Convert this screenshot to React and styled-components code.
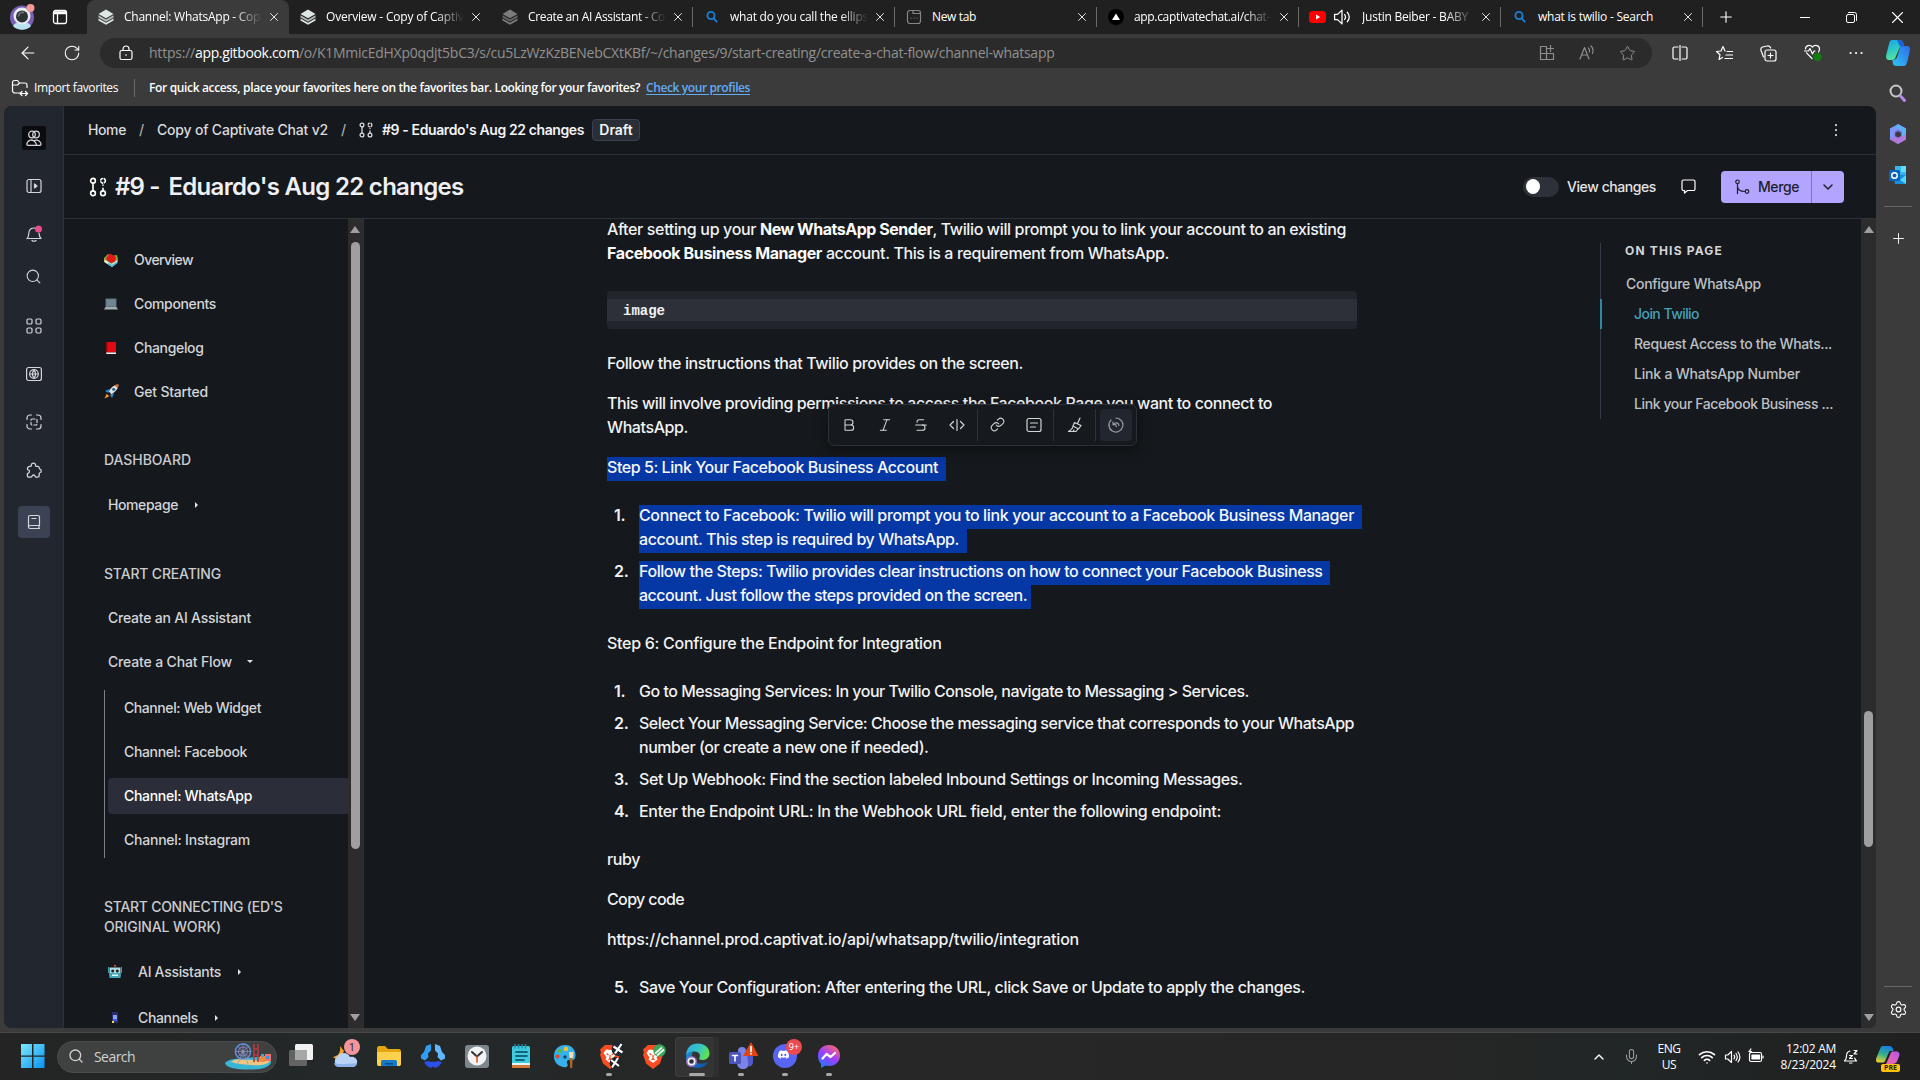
import React from "react";
import styled, { createGlobalStyle, css } from "styled-components";
import {
  ArrowLeft, RotateCw, Plus, X, Star, Search, Bold, Italic,
  Strikethrough, ChevronDown, ChevronUp, Mic, Wifi, Settings, Link,
} from "lucide-react";
import { FaDiscord } from "react-icons/fa";

const UI = '"Open Sans", "Noto Sans", sans-serif';
const APP = '"Inter", "Liberation Sans", sans-serif';

const Global = createGlobalStyle`
  *, *::before, *::after { box-sizing: border-box; }
  html, body { margin: 0; background: #202020; }
  body { width: 1920px; height: 1080px; overflow: hidden; }
  svg { display: block; flex: none; }
`;

const T = styled.span`
  letter-spacing: ${(p) => p.$ls || 0}px;
  white-space: pre;
`;

const Screen = styled.div`
  width: 1920px; height: 1080px; display: flex; flex-direction: column;
  font-family: ${UI}; font-size: 12px; color: #fff; overflow: hidden;
`;

/* ---------- tab strip ---------- */
const TabStrip = styled.div`
  height: 34px; flex: none; display: flex; background: #202020;
`;
const StripButton = styled.div`
  width: ${(p) => p.$w}px; height: 34px; display: flex; align-items: center; justify-content: center; flex: none;
`;
const Tab = styled.div`
  width: 202px; height: 34px; display: flex; align-items: center; padding: 0 7px 0 ${(p) => (p.$wide ? 10 : 11)}px;
  ${(p) => p.$active && css`background: #3b3b3b; border-radius: 8px 8px 0 0;`}
  ${(p) => p.$rule && css`background: linear-gradient(#6a6a6a, #6a6a6a) right center / 1px 20px no-repeat;`}
`;
const TabTitle = styled.div`
  flex: 1; min-width: 0; margin-left: ${(p) => (p.$sound ? 4 : 10)}px; line-height: 20px;
  ${(p) => p.$fade && css`mask-image: linear-gradient(90deg, #000 calc(100% - 28px), transparent);`}
`;
const TabClose = styled.div`
  width: 16px; margin-left: 4px; display: flex; justify-content: center;
`;

/* ---------- window body ---------- */
const Window = styled.div`
  height: 998px; flex: none; display: flex; background: #3b3b3b;
`;
const Main = styled.div`
  width: 1876px; display: flex; flex-direction: column;
`;
const AddressRow = styled.div`
  height: 38px; flex: none; display: flex; align-items: center; padding-left: 6px;
`;
const NavButton = styled.div`
  width: ${(p) => p.$w || 44}px; height: 30px; display: flex; align-items: center; justify-content: center; flex: none;
  margin-left: ${(p) => p.$ml || 0}px;
`;
const Omnibox = styled.div`
  width: 1552px; height: 30px; margin-left: 6px; padding: 0 5px 0 18px; border-radius: 15px; background: #2b2b2b;
  display: flex; align-items: center; color: #919191; font-size: 14px; flex: none;
`;
const Url = styled.div`
  flex: 1; margin-left: 15px; line-height: 20px; b { color: #fff; font-weight: 400; }
`;
const OmniIcon = styled.div`
  width: 40px; display: flex; justify-content: center; color: #8d8d8d;
`;
const FavBar = styled.div`
  height: 34px; flex: none; display: flex; align-items: center; padding: 0 0 3px 11px; line-height: 18px;
`;
const FavLabel = styled.span`margin-left: 5px; width: 100px;`;
const FavHint = styled.div`
  border-left: 1px solid #6a6a6a; padding-left: 14px; font-weight: 600; height: 18px; display: flex; gap: 6px;
`;
const FavLink = styled.span`color: #62abf5; text-decoration: underline; text-underline-offset: 2px;`;

const EdgeBar = styled.div`
  width: 44px; display: flex; flex-direction: column; align-items: center;
`;
const EdgeItem = styled.div`
  height: ${(p) => p.$h}px; display: flex; align-items: center; justify-content: center;
`;
const EdgeRule = styled.div`width: 28px; height: 1px; background: #666;`;
const Grow = styled.div`flex: 1;`;

/* ---------- page ---------- */
const Page = styled.div`
  height: 922px; margin-left: 4px; border-radius: 8px; overflow: hidden; display: flex;
  background: #15181c; font-family: ${APP}; font-size: 14px; font-weight: 500;
`;
const Rail = styled.div`
  width: 60px; background: #22262e; border-right: 1px solid #2d3139; display: flex; flex-direction: column; align-items: center;
  color: #d3d5d9; padding-top: 2px;
`;
const RailItem = styled.div`
  width: 32px; height: 32px; border-radius: 4px; display: flex; align-items: center; justify-content: center;
  margin-top: ${(p) => p.$mt}px;
  ${(p) => p.$active && css`background: #3a4253;`}
`;
const Avatar = styled.div`
  width: 24px; height: 24px; border-radius: 2px; background: #0b0c0f; margin-top: 18px;
  display: flex; align-items: center; justify-content: center;
`;
const Space = styled.div`width: 1812px; display: flex; flex-direction: column;`;
const Crumbs = styled.div`
  height: 49px; flex: none; border-bottom: 1px solid #2d3139; display: flex; align-items: center;
  padding: 0 38px 1px 24px; color: #d9dbde; line-height: 20px;
`;
const Slash = styled.span`width: 31px; text-align: center; color: #a6a9ae;`;
const CrumbStrong = styled.span`font-weight: 600; color: #f2f3f5; margin-left: 9px;`;
const Draft = styled.span`
  margin-left: 8px; width: 48px; height: 22px; line-height: 20px; border-radius: 4px; border: 1px solid #3a4150;
  background: #2a2e36; text-align: center; font-weight: 600; color: #f2f3f5;
`;
const TitleRow = styled.div`
  height: 64px; flex: none; border-bottom: 1px solid #2d3139; display: flex; align-items: center; padding: 0 32px 0 25px;
`;
const Title = styled.h1`
  margin: 0 0 0 8px; font-size: 24px; line-height: 30px; font-weight: 600; color: #eef0f4; display: flex; gap: 9px;
`;
const Switch = styled.div`
  width: 36px; height: 20px; border-radius: 10px; background: #2d3139; padding: 3px; display: flex; align-items: center;
  &::before { content: ""; width: 14px; height: 15px; border-radius: 50%; background: #fff; }
`;
const SwitchLabel = styled.span`margin-left: 8px; width: 113px; color: #e3e4e7;`;
const Merge = styled.div`
  margin-left: 24px; width: 123px; height: 32px; border-radius: 4px; background: #b3a4ff; color: #1d1f2b;
  display: flex; align-items: center; overflow: hidden;
`;
const MergeMain = styled.div`
  width: 91px; height: 32px; border-right: 1px solid #7f6ae0; display: flex; align-items: center; padding-left: 13px; gap: 8px;
`;
const MergeMore = styled.div`flex: 1; display: flex; justify-content: center;`;

const Columns = styled.div`flex: 1; min-height: 0; display: flex;`;
const Nav = styled.div`
  width: 284px; padding: 19px 0 0 40px; overflow: hidden; color: #d3d5d9;
`;
const NavRow = styled.div`
  height: ${(p) => p.$h || 44}px; display: flex; align-items: center; padding: 0 0 1px ${(p) => p.$pl || 0}px;
`;
const EmojiCell = styled.span`width: 30px; display: flex; align-items: center;`;
const Section = styled.div`
  padding: 12px 0; margin-top: ${(p) => p.$mt || 24}px; line-height: 20px; color: #c9cbcf;
`;
const Caret = styled.span`
  width: 0; height: 0; border-style: solid;
  ${(p) => (p.$open
    ? css`border-width: 3px 3px 0; border-color: #e3e4e7 transparent transparent; margin-left: 15px;`
    : css`border-width: 3px 0 3px 3px; border-color: transparent transparent transparent #e3e4e7; margin-left: 17px;`)}
`;
const Tree = styled.div`
  margin-top: 6px; border-left: 1px solid #7d8087; display: flex; flex-direction: column; gap: 8px; padding-left: 3px;
`;
const TreeItem = styled.div`
  height: 36px; padding: 0 0 2px 16px; display: flex; align-items: center; border-radius: 4px 0 0 4px;
  ${(p) => p.$active && css`background: #2b2d38; color: #fff;`}
`;
const NavTail = styled.div`margin-top: 1px; display: flex; flex-direction: column; gap: 2px;`;

const Scrollbar = styled.div`
  width: ${(p) => p.$w}px; background: #2c2c2c; display: flex; flex-direction: column; align-items: center;
  padding: 7px ${(p) => (p.$edge ? 1 : 0)}px 7px 0; ${(p) => p.$edge && css`border-right: 1px solid #2b2f36;`}
`;
const Arrow = styled.div`
  width: 0; height: 0; border: 5px solid transparent;
  ${(p) => (p.$down ? css`border-top: 7px solid #9f9f9f; border-bottom: 0;` : css`border-bottom: 7px solid #9f9f9f; border-top: 0;`)}
`;
const Thumb = styled.div`
  width: 9px; height: ${(p) => p.$h}px; margin-top: ${(p) => p.$mt}px; border-radius: 5px; background: #9f9f9f;
`;

const Editor = styled.div`
  position: relative; width: 1003px; padding-left: 243px; overflow: hidden; color: #f1f2f3;
  font-size: 16px; display: flex; flex-direction: column;
`;
const Line = styled.div`
  height: 24px; line-height: 21px; width: ${(p) => (p.$sel ? `${p.$sel}px` : "auto")}; white-space: pre;
  ${(p) => p.$sel && css`background: #0537a5; color: #f6f8fc;`}
  b { font-weight: 700; color: #fafafa; }
`;
const Block = styled.div`margin-bottom: ${(p) => p.$mb || 16}px;`;
const Code = styled.div`
  width: 750px; height: 38px; padding: 8px 0; border-radius: 4px; background: #22252c; margin-bottom: 24px;
`;
const CodeLine = styled.div`
  height: 22px; line-height: 24px; padding-left: 16px; background: #2d3039; font-family: "Liberation Mono", monospace;
  font-size: 14px; font-weight: 700;
`;
const List = styled.div`display: flex; flex-direction: column; gap: 8px; margin-bottom: 24px;`;
const Item = styled.div`display: flex;`;
const ItemText = styled.div`flex: none;`;
const Num = styled.span`width: 32px; flex: none; padding-left: 7px; line-height: 21px; letter-spacing: -0.2px; font-weight: 600;`;

const Toolbar = styled.div`
  position: absolute; left: 464px; top: 185px; width: 309px; height: 42px; background: #16191d;
  border: 1px solid #2d3139; border-radius: 6px; box-shadow: 0 4px 14px rgba(0, 0, 0, 0.35);
  display: flex; align-items: center; padding: 0 2px 1px; color: #d3d5d9;
`;
const Tool = styled.div`
  width: ${(p) => p.$w || 36}px; height: 32px; display: flex; align-items: center; justify-content: center; border-radius: 4px;
  flex: none;
  ${(p) => p.$active && css`background: #22262e; color: #9a9da3; margin-left: 3px;`}
`;
const ToolRule = styled.div`width: 1px; height: 32px; flex: none; background: #2d3139; margin: 0 1px 0 ${(p) => p.$ml || 1}px;`;

const TocColumn = styled.div`width: 494px; padding: 24px 0 0 233px;`;
const Toc = styled.div`
  height: 176px; width: 260px; border-left: 1px solid #333a48; color: #bdc0c4; font-size: 14px;
`;
const TocHead = styled.div`
  height: 26px; line-height: 16px; padding-left: 24px; font-size: 12px; font-weight: 700; color: #d3d5d9;
`;
const TocItem = styled.div`
  height: 30px; line-height: 29px; padding-left: ${(p) => (p.$top ? 25 : 33)}px;
  ${(p) => p.$active && css`margin-left: -1px; padding-left: 32px; border-left: 2px solid #2f87a0; color: #46a0ba;`}
`;

/* ---------- taskbar ---------- */
const Taskbar = styled.div`
  height: 48px; flex: none; border-top: 1px solid #484848; display: flex; align-items: center;
  background: linear-gradient(90deg, #242424, #232828 18%, #272727 40%, #262626 75%, #212626 85%, #202020);
`;
const StartCell = styled.div`width: 57px; padding: 0 0 1px 21px;`;
const SearchPill = styled.div`
  width: 220px; height: 32px; margin-right: 2px; border-radius: 16px; background: #3f4140; border: 1px solid #4b4d4c;
  display: flex; align-items: center; padding: 0 4px 1px 10px; font-size: 14px; color: #d0d0d0;
`;
const SearchText = styled.span`flex: 1; margin-left: 10px;`;
const AppCell = styled.div`
  width: 44px; height: 40px; display: flex; align-items: center; justify-content: center; border-radius: 4px; position: relative;
  padding: 0 0 2px ${(p) => p.$dx || 0}px;
  ${(p) => p.$active && css`background: #343434; box-shadow: inset -6px 0 0 -1px #2e2e2e, inset 0 0 0 1px #3e3e3e;`}
  ${(p) => p.$run && css`&::after {
    content: ""; position: absolute; bottom: 1px; left: ${22 - p.$run / 2}px; width: ${p.$run}px; height: 3px; border-radius: 2px; background: #a8a8a8;
  }`}
`;
const Badge = styled.span`
  position: absolute; top: 2px; right: ${(p) => p.$right || 6}px; width: 16px; height: 16px; border-radius: 8px;
  background: ${(p) => p.$bg}; color: ${(p) => p.$fg}; font-size: ${(p) => p.$fs || 11}px; line-height: 16px; text-align: center;
`;
const TrayCell = styled.div`
  width: ${(p) => p.$w}px; height: 40px; display: flex; flex-direction: column; align-items: ${(p) => (p.$end ? "flex-end" : "center")};
  justify-content: center; line-height: 16px;
`;

/* ---------- drawings ---------- */
const Svg = ({ w = 16, h, box, sw = 1.2, children }) => (
  <svg width={w} height={h || w} viewBox={box || `0 0 ${w} ${h || w}`} fill="none" stroke="currentColor" strokeWidth={sw} strokeLinecap="round" strokeLinejoin="round">
    {children}
  </svg>
);
const Layers = ({ dim }) => (
  <Svg w={16} sw={0}>
    <g fill={dim ? "#7b7d7d" : "#dfe6e6"}>
      <path d="M8 .5 15.5 5 8 9.2.5 5Z" />
      <path d="M.5 6.2 8 10.4l7.500-4.200V8.500L8 12.700.5 8.500Z" opacity=".75" />
      <path d="M.5 9.600 8 13.800l7.500-4.200V11.400L8 15.700.5 11.400Z" />
    </g>
  </Svg>
);
const BlueSearch = () => (
  <Svg w={16} sw={1.8}><g stroke="#1b7fd6"><circle cx="7" cy="6.500" r="3.600" /><path d="m9.700 9.300 3 3.400" /></g></Svg>
);
const NewTabIcon = () => (
  <Svg w={16}><g stroke="#858585"><rect x="1.500" y="1.500" width="13" height="13" rx="2.500" /><path d="M7 1.500v3h7.500M5 9h.1M8 9h.1M11 9h.1" /></g></Svg>
);
const Triangle = () => <Svg w={16} sw={0}><circle cx="8" cy="8" r="8" fill="#000" /><path d="m8 4.500 4 6.500H4Z" fill="#fff" /></Svg>;
const YouTube = () => <Svg w={17} h={16} sw={0}><rect y="2" width="17" height="12" rx="3.500" fill="#f00" /><path d="m7 5.500 4.200 2.500L7 10.500Z" fill="#fff" /></Svg>;
const Speaker = ({ w = 18 }) => (
  <Svg w={w} box="0 0 17 16" sw={1.2}><path d="M1.500 5.500h2.800L8.500 1.500v13L4.300 10.500H1.500ZM11 5.700c1 1.400 1 3.200 0 4.600M13.500 3.500c2.200 2.700 2.200 6.300 0 9" /></Svg>
);
const TraySpeaker = () => (
  <Svg w={18} h={16} sw={1.2}><path d="M1.500 6h2.300L7.500 2.500v11L3.800 10H1.500ZM10 6.200c.8 1.100.8 2.500 0 3.600M12 4.500c1.600 2.200 1.600 4.800 0 7M14 3c2.300 3 2.300 7 0 10" /></Svg>
);
const ProfilePic = () => (
  <Svg w={26} sw={0}>
    <circle cx="13" cy="13.500" r="12" fill="#7a5fb5" />
    <path d="M4 22c3-6 15-6 18 0-4 5-14 5-18 0Z" fill="#b9e3ee" />
    <circle cx="13" cy="12" r="8.500" fill="#e9edf2" /><circle cx="13" cy="12.500" r="6" fill="#2d3236" /><path d="M9.500 12a4 4 0 0 1 5-3.500" stroke="#777" strokeWidth="1.500" />
    <circle cx="21.500" cy="4" r="4" fill="#f49a94" />
  </Svg>
);
const ChangeIcon = ({ w = 14, h = 16 }) => (
  <Svg w={w} h={h} box="0 0 14 16" sw={1.3}>
    <circle cx="3" cy="3" r="1.900" /><circle cx="3" cy="13" r="1.900" /><path d="M3 5v6" />
    <circle cx="11" cy="13" r="1.900" /><circle cx="11" cy="3" r="1.900" strokeDasharray="1.500 1.500" /><path d="M11 6.500v.1M11 9v2" />
  </Svg>
);
const Books = () => (
  <Svg w={14} sw={0}><path d="m0 5 4-4 3 2 6-1 1 4-1 3-6 4-7-4Z" fill="#7fa832" /><path d="m.5 6.500 7 4.500 6-4v2.500L8 14 .5 9Z" fill="#eef3f0" /><path d="m4 9.500 4 2.300 5-3.300v2L8 14l-4-2.500Z" fill="#53b9d0" /><path d="M2.500 4.500 6 .5l6 3.500-1 4.500-4 1.500-4.500-3Z" fill="#e8141c" /></Svg>
);
const Laptop = () => (
  <Svg w={14} sw={0}><rect x="1.500" y="1.500" width="11" height="8.500" fill="#5f7480" /><path d="M0 12.500 1.500 10h11l1.500 2.500Z" fill="#a4adb2" /><path d="M2.500 2.500h9V9h-9Z" fill="#6f8791" /></Svg>
);
const RedBook = () => <Svg w={14} sw={0}><path d="M2 1h10v10.500H2Z" fill="#e20a12" /><path d="M2 1h1.500v11H2Z" fill="#8b0b10" /><path d="M2 11.500h10V13H2.500Z" fill="#f5f5f5" /></Svg>;
const Rocket = () => (
  <Svg w={15} h={15} box="0 0 14 14" sw={0}><path d="M13.500.5c-4 0-7 3-9 6.500l2.500 2.500c3.500-2 6.500-5 6.500-9Z" fill="#dfe4e7" /><path d="m9.500 1 4-.5-.5 4Z" fill="#f0641e" /><path d="M5.500 4.500 1 6.500 4 8.500ZM9.500 8.500 7.500 13 5.500 10Z" fill="#2a8fd8" /><path d="m2.500 9 2.500 2.500L.5 13.500Z" fill="#f59a23" /><circle cx="9" cy="5" r="1.500" fill="#356a8c" /></Svg>
);
const Robot = () => (
  <Svg w={14} h={14} sw={0}><path d="M1.500 2.500h11v9h-11Z" fill="#a9dbe4" /><path d="M0 2h1v6H0ZM13 2h1v6h-1Z" fill="#3f9fb0" /><path d="M6 0h2v1.500H6Z" fill="#f1531b" /><path d="M1.500 8h11v5h-11Z" fill="#43a6b7" /><circle cx="4.700" cy="6" r="1.500" fill="#222" /><circle cx="9.300" cy="6" r="1.500" fill="#222" /><path d="M4 9.500h6v1.500H4Z" fill="#dff" /></Svg>
);
const Phone = () => <Svg w={14} sw={0}><path d="M4 1h6v11H4Z" fill="#2b2a6e" /><path d="M5 4h4v4H5Z" fill="#8aa3f0" /><path d="M5 8h4v2H5Z" fill="#4a5be0" /><path d="M4 10h2v2H4Z" fill="#e8e24a" /></Svg>;
const PuzzleIcon = () => (
  <Svg w={17} sw={1.300}>
    <path d="M6.300 3.800a2.200 2.200 0 1 1 4.300 0c.1.500.4.700.9.600 1.600-.4 2.700.2 2.700 1.700 0 .8.4 1 1 1.200 1.400.5 1.400 2.700 0 3.200-.7.200-1 .5-1 1.200v1.800c0 1-.6 1.600-1.600 1.600h-1.500c-.5 0-.8-.3-.9-.800a1.700 1.700 0 0 0-3.300 0c-.1.500-.4.800-.9.800H4c-1 0-1.600-.6-1.600-1.600V12c0-.5.300-.8.800-.9a1.700 1.700 0 0 0 0-3.300c-.5-.1-.8-.4-.8-.9 0-1.800 1-2.700 2.900-2.500.6 0 .9-.1 1-.6Z" />
  </Svg>
);

const Copilot = ({ w = 24 }) => (
  <Svg w={w} h={28} box="0 0 24 28" sw={0}>
    <defs>
      <linearGradient id="cpa" x1="0" y1="0" x2="0.300" y2="1"><stop offset="0" stopColor="#1aa3e8" /><stop offset=".5" stopColor="#2cc6c9" /><stop offset="1" stopColor="#52e59a" /></linearGradient>
      <linearGradient id="cpb" x1="1" y1="0" x2="0" y2="1"><stop offset="0" stopColor="#2f6be8" /><stop offset="1" stopColor="#2fc4f5" /></linearGradient>
    </defs>
    <path d="M6 1h7c3 0 4 2 4.500 4l.5 3h-4l-4 9c-.8 3-2 4-4 4H3c-3 0-3.500-2.500-2.500-6L3 5C3.500 2.500 4.500 1 6 1Z" fill="url(#cpa)" />
    <path d="M18 27h-7c-3 0-3.800-1-4.200-3L6.500 21c2.500 0 4-1 5-4l2.500-8c.5-1.500 1.500-2 3-2h4.500c2.500 0 3 2.500 2 6L21.500 22c-.8 3-2 5-3.500 5Z" fill="url(#cpb)" />
    <path d="M13 1c3 0 4 2 4.500 4l.5 2.500h-4L11 1Z" fill="#1a62d8" />
  </Svg>
);
const M365 = () => (
  <Svg w={18} h={20} sw={0}>
    <path d="M9 0 17 4.500v11L9 20 1 15.500v-11Z" fill="#7e6ee0" />
    <path d="M9 0 17 4.500V12l-4 1.500V7.500L9 5.500 5 3Z" fill="#5fb0f5" />
    <path d="M1 4.500 5 2.500l4 3-3.500 2V13L1 15.500Z" fill="#7d9bf5" />
    <path d="m1 15.500 4.500-3L9 14.500l8-4.500v5.500L9 20Z" fill="#b27ad9" />
    <path d="M9 7.300 12 9v3L9 13.300 6.300 12V9Z" fill="#3b3b3b" />
  </Svg>
);
const Outlook = () => (
  <Svg w={18} h={20} sw={0}><path d="M6 1h11v9H6Z" fill="#35b8f1" /><path d="M12 1h5v6h-5Z" fill="#66dbff" /><path d="M4 9l13 1v9H6Z" fill="#1490df" /><path d="m17 10-6 5 6 4Z" fill="#50d9ff" /><rect y="5" width="11" height="11" rx="1.500" fill="#0a63c0" /><circle cx="5.500" cy="10.500" r="2.800" stroke="#fff" strokeWidth="1.500" /></Svg>
);
const WinLogo = () => (
  <Svg w={24} sw={0}>
    <defs><linearGradient id="win" x1="0" y1="0" x2="1" y2="1"><stop offset="0" stopColor="#7ae8ff" /><stop offset="1" stopColor="#0a92f0" /></linearGradient></defs>
    <path d="M0 0h11v11.500H0ZM12.500 0h11v11.500h-11ZM0 12.800h11V24H0ZM12.500 12.800h11V24h-11Z" fill="url(#win)" />
  </Svg>
);
const Fair = () => (
  <Svg w={48} h={28} sw={0}>
    <path d="M1 21c3-4 12-5 19-4 7-2 20-3 26-1l1 5c-4 6-12 6.500-23 6.500S2 26 1 21Z" fill="#39b5d6" />
    <path d="M7 19.500c6-3.500 16-2 25-1 8 .5 12-.5 14 .5-3 4-10 5-19 4-8-.5-16-1-20-3.500Z" fill="#f0c682" />
    <circle cx="19" cy="9.500" r="7.500" stroke="#5b8fd8" strokeWidth="1.600" strokeDasharray="1.600 .9" /><circle cx="19" cy="9.500" r="4.500" stroke="#8a6fb5" strokeWidth="1.200" strokeDasharray="1 1" /><circle cx="19" cy="9.500" r="1.800" fill="#e85c5c" />
    <path d="m19 9.500-5 12M19 9.500l5 12M12 9.500h14M19 2.500v14M14 4.500l10 10M24 4.500l-10 10" stroke="#7c98c9" strokeWidth=".8" />
    <path d="M30 2.500v17M34 2.500v17M30 7h4M30 13h4" stroke="#b43a3f" strokeWidth="1.600" />
    <path d="M36 14h5v6h-5Z" fill="#ef8a3a" /><path d="M41 12h6v7h-6Z" fill="#f0706a" /><path d="M42 14h3v3h-3Z" fill="#4a90e2" /><path d="M37 12h3v3h-3Z" fill="#4aa3d8" />
  </Svg>
);
const TaskView = () => <Svg w={24} sw={0}><rect x="6" width="18" height="16" rx="1.500" fill="#f1f1f1" /><rect y="6" width="18" height="16" rx="1.500" fill="#6a6a6a" opacity=".9" /><path d="M6 6h12v10H6Z" fill="#a7a7a7" /></Svg>;
const Weather = () => (
  <Svg w={26} h={26} sw={0}><path d="M8 3c1 7-2 10-7 11 2 2 6 2 8 0l3-6Z" fill="#f5a623" /><path d="M7 24a6 6 0 0 1-1-11c2-4 10-4 12 1 4-1 8 2 7 6-.5 3-3 4-5 4Z" fill="#b9d2f7" /><path d="M7 24a5 5 0 0 1-5-4c6 2 15 1 23 0-.5 3-3 4-5 4Z" fill="#8fb2ec" /></Svg>
);
const Folder = () => <Svg w={24} h={22} sw={0}><path d="M0 3c0-1 1-2 2-2h6l3 3h11c1 0 2 1 2 2v13H0Z" fill="#e5a512" /><path d="M0 7h24v12c0 1.500-1 2-2 2H2c-1 0-2-.5-2-2Z" fill="#fdd14d" /><path d="M4 21v-4c0-1.500 1-2 2-2h12c1 0 2 .5 2 2v4Z" fill="#1679c9" /><path d="M8 18h8v1.500H8Z" fill="#0b4e8a" /></Svg>;
const Hyper = () => (
  <Svg w={24} sw={0}><path d="M5 2 10 0v6.500L7 9.500 7.500 13 4 16.500 0 14.500V11l3-3Z" fill="#2f9df2" /><path d="m19 2-5-2v6.500L17 9.500 16.500 13l3.500 3.500 4-2V11l-3-3Z" fill="#62b8ff" /><path d="m3 18.500 3.500-1.500 3 .8h5l3-.8 3.500 1.500L18 22l-3.500 2-2.500-1.500L9.500 24 6 22Z" fill="#2b50e8" /></Svg>
);
const Clock = () => <Svg w={24} sw={0}><rect y="1" width="24" height="23" rx="3" fill="#7e868d" /><circle cx="12" cy="12" r="9.500" fill="#f2f3f4" /><path d="m7 8 5 4.500L17 8" stroke="#333" strokeWidth="2" /><path d="M12 12v6" stroke="#e04c1c" strokeWidth="1.500" /></Svg>;
const Notepad = () => <Svg w={20} h={24} sw={0}><rect x="1" y="2" width="18" height="20" rx="1.500" fill="#3ecbe0" /><path d="M1 19h18v2H1Z" fill="#e6f7fa" /><path d="M1 21h18v3H1Z" fill="#d5793a" /><path d="M5 8h11M5 12h11M5 16h8" stroke="#14647e" strokeWidth="1.800" /><path d="M4 0v4M7.500 0v4M11 0v4M14.500 0v4" stroke="#1d8ba8" strokeWidth="1.400" /></Svg>;
const Paint = () => (
  <Svg w={24} sw={0}><path d="M12 1c7 0 10.500 5 10.500 10s-3 6-6 5c-3 0-3 2-2 4s-1 4-4 3C5 22 .5 18 1 12 1 5 6 1 12 1Z" fill="#35b2ea" /><circle cx="4.500" cy="12.500" r="2" fill="#e2432f" /><circle cx="7" cy="7" r="2.200" fill="#57b947" /><circle cx="13" cy="5" r="2.200" fill="#f7c325" /><circle cx="12" cy="13" r="1.800" fill="#134a6e" /><path d="M16 8h4.500l-.5 6h-3.500Z" fill="#f4dfb2" /><path d="M16.700 14h2.800l-.3 10h-2Z" fill="#b5651d" /></Svg>
);
const BraveIcon = ({ green }) => (
  <svg width="28" height="28" viewBox="0 0 28 28">
    <path d="M7 3h10l5 4.500-1 3 1 2-3 9-7 5.500-7-5.500-3-9 1-2-1-3Z" fill="#fb4b23" />
    <path d="M12 8 8 7.500 5.500 11l3 4.500-1 2L12 21l4.500-3.500-1-2 3-4.500L16 7.500Z" fill="#fff" />
    <path d="m8.500 11.500 2 1.500M15.500 11.500l-2 1.500M12 13v3.500l-1.500 1.500M12 16.500l1.500 1.500" stroke="#fb4b23" strokeWidth="1.300" fill="none" />
    {green
      ? <g><circle cx="18.500" cy="8.500" r="6.200" fill="#3aa657" /><path d="m14 11.500 7-6M16 13.500l7-6" stroke="#eef4ee" strokeWidth="1.800" /></g>
      : <g><circle cx="20.500" cy="7" r="7" fill="#20262c" /><path d="m15.500 4.500 9 6M23.500 2l-6.500 9.500" stroke="#fff" strokeWidth="2.200" /><circle cx="17.500" cy="21" r="6" fill="#20262c" /><path d="m13 18 8 6M20 16l-6 9.500" stroke="#fff" strokeWidth="2" /></g>}
  </svg>
);
const Edge = () => (
  <Svg w={25} h={25} sw={0}>
    <defs>
      <linearGradient id="ea" x1="0" y1="0" x2="1" y2="0.400"><stop offset="0" stopColor="#2aa7e8" /><stop offset=".6" stopColor="#35c6c4" /><stop offset="1" stopColor="#5fe053" /></linearGradient>
      <linearGradient id="eb" x1="0" y1="0" x2="1" y2="1"><stop offset="0" stopColor="#1f8fe0" /><stop offset="1" stopColor="#0c4f9d" /></linearGradient>
    </defs>
    <path d="M1 13C1 5 6 .5 12.500.5 20 .5 24.500 5 24.500 10.500c0 4-3 6.500-7 6.500-3 0-4-1-3-2.500 1.500-3-1-6-5-6C5 8.500 2 10.500 1 13Z" fill="url(#ea)" />
    <path d="M1 13c1-3 4-4.500 8-4.500C6 10 6 15 9 18c4 4 10 3 14 1-2 4-6 6-10.500 6C5 25 .5 19 1 13Z" fill="url(#eb)" />
    <circle cx="6.500" cy="18.500" r="5.500" fill="#8a6cc0" /><circle cx="6.500" cy="18.500" r="4" fill="#eef2f5" /><circle cx="6.500" cy="18.500" r="2.300" fill="#2b2f33" />
  </Svg>
);
const Teams = () => (
  <Svg w={30} h={28} sw={0}><circle cx="13" cy="9" r="4" fill="#7b83eb" /><path d="M8 12h12v9c0 4-3 6-6 6s-6-2-6-6Z" fill="#7b83eb" /><path d="M18 12h6v8c0 3-2 4.500-4.500 4.500Z" fill="#5059c9" /><rect y="10" width="12" height="12" rx="1.500" fill="#4b53bc" /><path d="M3.500 13.500h5M6 13.500V19" stroke="#fff" strokeWidth="1.600" /><path d="m22 0 7.500 14h-15.500Z" fill="#e04416" /><path d="M22 4.500V9.500M22 11.500v.3" stroke="#fff" strokeWidth="1.700" /></Svg>
);
const Discord = () => (
  <svg width="24" height="24" viewBox="0 0 24 24"><circle cx="12" cy="12" r="12" fill="#5865f2" /><FaDiscord x="4.500" y="4.500" width="15" height="15" color="#fff" /></svg>
);
const Messenger = () => (
  <Svg w={24} sw={0}>
    <defs><linearGradient id="ms" x1="0.200" y1="1" x2="0.800" y2="0"><stop offset="0" stopColor="#1a7dff" /><stop offset=".5" stopColor="#9a3dff" /><stop offset="1" stopColor="#ff6a6a" /></linearGradient></defs>
    <path d="M12 1c6.500 0 11 4.500 11 10.500S18.500 22 12 22c-1.300 0-2.500-.2-3.500-.5L4 24v-4C2 18 1 15 1 11.500 1 5.500 5.500 1 12 1Z" fill="url(#ms)" /><path d="m5.500 14.500 4-4.500 4 3 4.500-4" stroke="#fff" strokeWidth="2.200" />
  </Svg>
);
const CopilotPre = () => (
  <Svg w={26} h={26} sw={0}>
    <defs>
      <linearGradient id="pa" x1="0.500" y1="0" x2="0.200" y2="1"><stop offset="0" stopColor="#1a7fe0" /><stop offset=".5" stopColor="#35b08a" /><stop offset="1" stopColor="#f2d32b" /></linearGradient>
      <linearGradient id="pb" x1="1" y1="0" x2="0" y2="1"><stop offset="0" stopColor="#b455e8" /><stop offset="1" stopColor="#f76aa0" /></linearGradient>
    </defs>
    <path d="M8 2h6c3 0 4 2 4.500 5h-4l-4 9c-.5 2-1.500 2.500-3 2.500H4c-3 0-3.500-2-2.500-5L5 5c.5-2 1.500-3 3-3Z" fill="url(#pa)" />
    <path d="M17 20h-6l4-9c.5-2 1.500-3.500 3-3.500h3c3 0 4 2 3 5l-2 5c-.5 1.500-2 2.500-5 2.500Z" fill="url(#pb)" />
  </Svg>
);
const PreTag = styled.span`
  position: absolute; bottom: 5px; left: 15px; width: 19px; height: 8px; border-radius: 2px; background: #ffc20e; color: #2a2200;
  font-size: 7px; font-weight: 700; line-height: 8px; text-align: center;
`;
const CopilotCell = styled.div`position: relative; width: 54px; height: 40px; display: flex; align-items: center; padding-left: 9px;`;

/* ---------- data ---------- */
const tabs = [
  { icon: <Layers />, title: "Channel: WhatsApp - Cop", ls: -0.25, active: true, fade: true },
  { icon: <Layers />, title: "Overview - Copy of Captiv", ls: -0.2, fade: true, rule: true },
  { icon: <Layers dim />, title: "Create an AI Assistant - Co", ls: -0.35, fade: true, rule: true },
  { icon: <BlueSearch />, title: "what do you call the ellips", ls: -0.225, fade: true, rule: true },
  { icon: <NewTabIcon />, title: "New tab", ls: -0.355, rule: true },
  { icon: <Triangle />, title: "app.captivatechat.ai/chat-", ls: -0.326, fade: true, rule: true },
  { icon: <YouTube />, title: "Justin Beiber - BABY", ls: -0.224, fade: true, rule: true, sound: true },
  { icon: <BlueSearch />, title: "what is twilio - Search", ls: -0.242, rule: true },
];
const pages = [
  [<Books />, "Overview", -0.568],
  [<Laptop />, "Components", -0.353],
  [<RedBook />, "Changelog", -0.347],
  [<Rocket />, "Get Started", -0.199],
];
const channels = [
  ["Channel: Web Widget", -0.424],
  ["Channel: Facebook", -0.342],
  ["Channel: WhatsApp", -0.297, true],
  ["Channel: Instagram", -0.233],
];
const step5 = [
  [["Connect to Facebook: Twilio will prompt you to link your account to a Facebook Business Manager", -0.372, 723],
    ["account. This step is required by WhatsApp.", -0.423, 328]],
  [["Follow the Steps: Twilio provides clear instructions on how to connect your Facebook Business", -0.432, 691],
    ["account. Just follow the steps provided on the screen.", -0.486, 392]],
];
const step6 = [
  [["Go to Messaging Services: In your Twilio Console, navigate to Messaging > Services.", -0.478]],
  [["Select Your Messaging Service: Choose the messaging service that corresponds to your WhatsApp", -0.478],
    ["number (or create a new one if needed).", -0.454]],
  [["Set Up Webhook: Find the section labeled Inbound Settings or Incoming Messages.", -0.399]],
  [["Enter the Endpoint URL: In the Webhook URL field, enter the following endpoint:", -0.31]],
];
const save = [[["Save Your Configuration: After entering the URL, click Save or Update to apply the changes.", -0.372]]];

const Steps = ({ items, start = 1 }) => (
  <List>
    {items.map((lines, i) => (
      <Item key={i}>
        <Num>{i + start}.</Num>
        <ItemText>{lines.map(([text, ls, sel]) => <Line key={text} $sel={sel}><T $ls={ls}>{text}</T></Line>)}</ItemText>
      </Item>
    ))}
  </List>
);

const BrowserTabs = () => (
  <TabStrip>
    <StripButton $w={44}><ProfilePic /></StripButton>
    <StripButton $w={32}><Svg w={16} sw={1.3}><rect x="1.500" y="1.500" width="13" height="13" rx="2" /><path d="M1.500 4.500h13M5.500 4.500v10M2 3h12" /></Svg></StripButton>
    <StripButton $w={11} />
    {tabs.map((t, i) => (
      <Tab key={t.title} $active={t.active} $rule={t.rule && i > 1} $wide={t.sound}>
        {t.icon}
        {t.sound && <StripButton $w={32}><Speaker /></StripButton>}
        <TabTitle $fade={t.fade} $sound={t.sound}><T $ls={t.ls}>{t.title}</T></TabTitle>
        <TabClose><X size={14} strokeWidth={1.5} /></TabClose>
      </Tab>
    ))}
    <StripButton $w={45}><Plus size={18} strokeWidth={1.5} /></StripButton>
    <Grow />
    <StripButton $w={46}><Svg w={10} sw={1}><path d="M0 5.500h10" /></Svg></StripButton>
    <StripButton $w={46}><Svg w={11} sw={1}><rect x=".5" y="2.500" width="8" height="8" rx="1.500" /><path d="M2.500.5h6a2 2 0 0 1 2 2v6" /></Svg></StripButton>
    <StripButton $w={46}><Svg w={11} sw={1.1}><path d="m.5.500 10 10M10.500.500l-10 10" /></Svg></StripButton>
  </TabStrip>
);

const Address = () => (
  <AddressRow>
    <NavButton><ArrowLeft size={20} strokeWidth={1.4} /></NavButton>
    <NavButton><RotateCw size={18} strokeWidth={1.4} /></NavButton>
    <Omnibox>
      <Svg w={16}><g stroke="#fff"><rect x="2" y="5.500" width="12" height="9" rx="1.800" /><path d="M5 5.500V4a3 3 0 0 1 6 0v1.500M8 9.700v.6" /></g></Svg>
      <Url>
        <T $ls={-0.219}>https://</T><b><T $ls={-0.35}>app.gitbook.com</T></b>
        <T $ls={-0.261}>/o/K1MmicEdHXp0qdjt5bC3/s/cu5LzWzKzBENebCXtKBf/~/changes/9/start-creating/create-a-chat-flow/channel-whatsapp</T>
      </Url>
      <OmniIcon><Svg w={16}><path d="M7.500 1.500h-6v13h13v-6h-13M7.500 1.500v13M11.500.500v6M8.500 3.500h6" /></Svg></OmniIcon>
      <OmniIcon><Svg w={16}><path d="m1 14 4.500-11.500L10 14M2.700 10h5.600M9.500 3c1 1 1.300 2.500 1 4M12 1c2 2 2.500 4.800 1.500 7.500" /></Svg></OmniIcon>
      <OmniIcon><Star size={17} strokeWidth={1.4} /></OmniIcon>
    </Omnibox>
    <NavButton $w={53} $ml={1}><Svg w={16}><path d="M6 2H2.500A1.500 1.500 0 0 0 1 3.500v9A1.500 1.500 0 0 0 2.500 14H6M10 2h3.500A1.500 1.500 0 0 1 15 3.500v9a1.500 1.500 0 0 1-1.500 1.500H10M8 0v16" /></Svg></NavButton>
    <NavButton $w={37}><Svg w={17}><path d="M7 1.500 5 6l-4.500.5L4 9.700 3 14.500l3.500-2M7 1.500 9 6M11 6.500h5.500M10 10h6.500M9 13.500h7.500" /></Svg></NavButton>
    <NavButton $w={51}><Svg w={17}><rect x="5" y="5" width="11" height="11" rx="2" /><path d="M10.500 8v5M8 10.500h5M3.500 12 1 5.500C.5 3.500 1 2.500 2.500 2L7 1c2-.5 3 0 3.700 2" /></Svg></NavButton>
    <NavButton $w={37}><Svg w={18}><path d="m8 14.500-5.500-5.700M.5 7h4l1.500-2.500L8.500 10 10 7h1M1.500 5C1.500 1.500 6 0 8.500 3 11 0 15.500 1.500 15.500 5c0 1-.3 2-1 3" /><circle cx="13.500" cy="13" r="4" fill="#107c10" stroke="none" /></Svg></NavButton>
    <NavButton $w={50}><Svg w={14} sw={2}><path d="M1.500 7h.1M7 7h.1M12.500 7h.1" /></Svg></NavButton>
  </AddressRow>
);

const Favorites = () => (
  <FavBar>
    <Svg w={18}><path d="M10 14H4a2.500 2.500 0 0 1-2.500-2.500v-8A2 2 0 0 1 3.500 1.500h3L8.500 4H14a2 2 0 0 1 2 2v2.500M1.500 6h5l2-2M9.500 14.500h7M11 12.500l-2 2 2 2M14.500 12.500l2 2-2 2" /></Svg>
    <FavLabel><T $ls={-0.369}>Import favorites</T></FavLabel>
    <FavHint>
      <T $ls={-0.346}>For quick access, place your favorites here on the favorites bar. Looking for your favorites?</T>
      <FavLink><T $ls={-0.396}>Check your profiles</T></FavLink>
    </FavHint>
  </FavBar>
);

const SideRail = () => (
  <Rail>
    <Avatar><Svg w={16} h={18} sw={1.300}><circle cx="6" cy="5.500" r="3.300" /><circle cx="10" cy="5.500" r="3.300" /><path d="M2 16.300C.5 16.300.7 14.800 1.300 13.500 3 10.500 6 10.500 8 12c1.500-1.500 5-1.300 6.500 1.500.8 1.300.7 2.800-.5 2.800ZM8 12c1.500 1 2.300 2.500 2.500 4" /></Svg></Avatar>
    <RailItem $mt={20}><Svg w={16}><rect x="1" y="1.500" width="14" height="13" rx="2" /><path d="M5 1.500v13M8.500 6v4l2.500-2Z" fill="currentColor" /></Svg></RailItem>
    <RailItem $mt={16}><Svg w={18}><path d="M2 13.500c2-1.500 1.500-4 2-6.500.5-2.500 2.500-4 5-4 1 0 1 .2 1.500.4M14 8c.2 2 .2 4 2 5.500H2M7 15.500c1 1 3 1 4 0" /><circle cx="13.500" cy="4" r="3.500" fill="#ea4c89" stroke="none" /></Svg></RailItem>
    <RailItem $mt={10}><Search size={17} strokeWidth={1.500} /></RailItem>
    <RailItem $mt={18}><Svg w={16}><rect x="1" y="1" width="5" height="5" rx="1.200" /><rect x="10" y="1" width="5" height="5" rx="1.200" /><rect x="1" y="10" width="5" height="5" rx="1.200" /><rect x="10" y="10" width="5" height="5" rx="1.200" /></Svg></RailItem>
    <RailItem $mt={16}><Svg w={16}><rect x=".6" y="1.500" width="14.800" height="13" rx="2" /><circle cx="8" cy="8" r="4.300" /><path d="M4 8h8M8 4c-2 2.500-2 5.500 0 8 2-2.500 2-5.500 0-8" /></Svg></RailItem>
    <RailItem $mt={16}><Svg w={16}><path d="M5.500 1H4a3 3 0 0 0-3 3v1.500M10.500 1H12a3 3 0 0 1 3 3v1.500M5.500 15H4a3 3 0 0 1-3-3v-1.500M10.500 15H12a3 3 0 0 0 3-3v-1.500" /><rect x="5" y="5" width="6" height="6" rx="1" strokeDasharray="3 2" /></Svg></RailItem>
    <RailItem $mt={16}><PuzzleIcon /></RailItem>
    <RailItem $mt={20} $active><Svg w={16}><path d="M4 1.500h8a1.500 1.500 0 0 1 1.500 1.500v8.500H4.500a2 2 0 0 0-2 1.500V3A1.500 1.500 0 0 1 4 1.500ZM2.500 13c0 1 .8 1.500 1.500 1.500h9.500M13 11.500v3M6 4.500h4" /></Svg></RailItem>
  </Rail>
);

const Navigation = () => (
  <Nav>
    {pages.map(([icon, name, ls]) => (
      <NavRow key={name}><EmojiCell>{icon}</EmojiCell><T $ls={ls}>{name}</T></NavRow>
    ))}
    <Section><T $ls={-0.049}>DASHBOARD</T></Section>
    <NavRow $h={46} $pl={4}><T $ls={-0.398}>Homepage</T><Caret /></NavRow>
    <Section><T $ls={-0.169}>START CREATING</T></Section>
    <NavRow $pl={4}><T $ls={-0.222}>Create an AI Assistant</T></NavRow>
    <NavRow $pl={4}><T $ls={-0.153}>Create a Chat Flow</T><Caret $open /></NavRow>
    <Tree>
      {channels.map(([name, ls, active]) => <TreeItem key={name} $active={active}><T $ls={ls}>{name}</T></TreeItem>)}
    </Tree>
    <Section $mt={27}>
      <div><T $ls={-0.278}>START CONNECTING (ED'S</T></div>
      <div><T $ls={-0.113}>ORIGINAL WORK)</T></div>
    </Section>
    <NavTail>
      <NavRow $pl={4}><EmojiCell><Robot /></EmojiCell><T $ls={-0.299}>AI Assistants</T><Caret /></NavRow>
      <NavRow $pl={4}><EmojiCell><Phone /></EmojiCell><T $ls={-0.348}>Channels</T><Caret /></NavRow>
    </NavTail>
  </Nav>
);

const FormatBar = () => (
  <Toolbar>
    <Tool><Bold size={16} strokeWidth={1.600} /></Tool>
    <Tool><Italic size={16} strokeWidth={1.600} /></Tool>
    <Tool><Strikethrough size={16} strokeWidth={1.600} /></Tool>
    <Tool><Svg w={16}><path d="M4.500 4.500 1 8l3.500 3.500M11.500 4.500 15 8l-3.500 3.500M8 2.500v11" /></Svg></Tool>
    <ToolRule $ml={2} />
    <Tool $w={37}><Link size={15} strokeWidth={1.700} /></Tool>
    <Tool $w={36}><Svg w={16}><rect x="1" y="1.500" width="14" height="13" rx="2" /><path d="M4.500 6h7M4.500 10h5" /></Svg></Tool>
    <ToolRule />
    <Tool $w={39}><Svg w={16}><path d="m13 1-2.500 5.500M7.500 5.500l6.500 3M7.500 5.500 6 9l5.500 3 2.500-3.500M6 9c0 2-2 4-4.500 5.500H9L11 12M6 14.500l1-1.500" /></Svg></Tool>
    <ToolRule />
    <Tool $w={32} $active><Svg w={16}><path d="M8 1a7 7 0 1 1-5 2M1.200 6.500v3M2 12l1.500 1.500" /><path d="M11 8.500c-.5-3-3.500-3.500-5.500-1M5 5v2.700h2.700M8 9l.5.500" /></Svg></Tool>
  </Toolbar>
);

const Document = () => (
  <Editor>
    <Block $mb={24}>
      <Line><T $ls={-0.348}>After setting up your </T><b><T $ls={-0.472}>New WhatsApp Sender</T></b><T $ls={-0.371}>, Twilio will prompt you to link your account to an existing</T></Line>
      <Line><b><T $ls={-0.392}>Facebook Business Manager</T></b><T $ls={-0.374}> account. This is a requirement from WhatsApp.</T></Line>
    </Block>
    <Code><CodeLine>image</CodeLine></Code>
    <Block><Line><T $ls={-0.392}>Follow the instructions that Twilio provides on the screen.</T></Line></Block>
    <Block>
      <Line><T $ls={-0.411}>This will involve providing permissions to access the Facebook Page you want to connect to</T></Line>
      <Line><T $ls={-0.406}>WhatsApp.</T></Line>
    </Block>
    <Block $mb={24}><Line $sel={339}><T $ls={-0.446}>Step 5: Link Your Facebook Business Account</T></Line></Block>
    <Steps items={step5} />
    <Block $mb={24}><Line><T $ls={-0.289}>Step 6: Configure the Endpoint for Integration</T></Line></Block>
    <Steps items={step6} />
    <Block><Line><T $ls={-0.402}>ruby</T></Line></Block>
    <Block><Line><T $ls={-0.627}>Copy code</T></Line></Block>
    <Block $mb={24}><Line><T $ls={-0.208}>https://channel.prod.captivat.io/api/whatsapp/twilio/integration</T></Line></Block>
    <Steps items={save} start={5} />
    <FormatBar />
  </Editor>
);

const Outline = () => (
  <TocColumn>
    <Toc>
      <TocHead><T $ls={1.182}>ON THIS PAGE</T></TocHead>
      <TocItem $top><T $ls={-0.281}>Configure WhatsApp</T></TocItem>
      <TocItem $active><T $ls={-0.555}>Join Twilio</T></TocItem>
      <TocItem><T $ls={-0.359}>Request Access to the Whats...</T></TocItem>
      <TocItem><T $ls={-0.2}>Link a WhatsApp Number</T></TocItem>
      <TocItem><T $ls={-0.401}>Link your Facebook Business ...</T></TocItem>
    </Toc>
  </TocColumn>
);

const GitBook = () => (
  <Page>
    <SideRail />
    <Space>
      <Crumbs>
        <T $ls={-0.387}>Home</T><Slash>/</Slash><T $ls={-0.195}>Copy of Captivate Chat v2</T><Slash>/</Slash>
        <ChangeIcon />
        <CrumbStrong><T $ls={-0.393}>#9 - Eduardo's Aug 22 changes</T></CrumbStrong>
        <Draft>Draft</Draft>
        <Grow />
        <Svg w={4} h={16} sw={2.200}><path d="M2 3v.1M2 8v.1M2 13v.1" /></Svg>
      </Crumbs>
      <TitleRow>
        <ChangeIcon w={18} h={20} />
        <Title><T $ls={-0.879}>#9 -</T><T $ls={-0.699}>Eduardo's Aug 22 changes</T></Title>
        <Grow />
        <Switch /><SwitchLabel><T $ls={-0.426}>View changes</T></SwitchLabel>
        <Svg w={17}><path d="M3.500 2h10A1.500 1.500 0 0 1 15 3.500v7.500a1.500 1.500 0 0 1-1.500 1.500H7.500L4.500 15v-2.500h-1A1.500 1.500 0 0 1 2 11V3.500A1.500 1.500 0 0 1 3.500 2Z" /></Svg>
        <Merge>
          <MergeMain>
            <Svg w={16}><circle cx="3.500" cy="2.800" r="1.800" /><circle cx="13" cy="12.500" r="1.800" /><path d="M3.500 4.600v10M3.500 7c0 3.500 2 5.500 7.500 5.500" /></Svg>
            <T $ls={-0.409}>Merge</T>
          </MergeMain>
          <MergeMore><ChevronDown size={16} strokeWidth={2.200} /></MergeMore>
        </Merge>
      </TitleRow>
      <Columns>
        <Navigation />
        <Scrollbar $w={16} $edge><Arrow /><Thumb $mt={9} $h={607} /><Grow /><Arrow $down /></Scrollbar>
        <Document />
        <Outline />
        <Scrollbar $w={15}><Arrow /><Thumb $mt={478} $h={136} /><Grow /><Arrow $down /></Scrollbar>
      </Columns>
    </Space>
  </Page>
);

const EdgeSidebar = () => (
  <EdgeBar>
    <EdgeItem $h={38}><Copilot /></EdgeItem>
    <EdgeItem $h={42}><Svg w={18} h={20} sw={2}><circle cx="7" cy="8" r="5.500" stroke="#c9c9c9" /><path d="m11.500 13 4 4.500" stroke="#b58ae8" strokeWidth="3" /></Svg></EdgeItem>
    <EdgeItem $h={40}><M365 /></EdgeItem>
    <EdgeItem $h={42}><Outlook /></EdgeItem>
    <EdgeItem $h={20}><EdgeRule /></EdgeItem>
    <EdgeItem $h={44}><Plus size={17} strokeWidth={1.300} /></EdgeItem>
    <Grow />
    <EdgeRule />
    <EdgeItem $h={45}><Settings size={19} strokeWidth={1.400} /></EdgeItem>
  </EdgeBar>
);

const apps = [
  { icon: <TaskView /> },
  { icon: <Weather />, badge: <Badge $bg="#f4959b" $fg="#222" $right={7}>1</Badge> },
  { icon: <Folder /> }, { icon: <Hyper /> }, { icon: <Clock /> }, { icon: <Notepad /> }, { icon: <Paint /> },
  { icon: <BraveIcon />, run: 6, dx: 5 },
  { icon: <BraveIcon green />, dx: 3 },
  { icon: <Edge />, run: 16, active: true },
  { icon: <Teams />, run: 6, dx: 5 },
  { icon: <Discord />, run: 6, badge: <Badge $bg="#ea4a50" $fg="#fff" $fs={9} $right={5}>9+</Badge> },
  { icon: <Messenger />, run: 6 },
];

const WindowsTaskbar = () => (
  <Taskbar>
    <StartCell><WinLogo /></StartCell>
    <SearchPill><Search size={16} strokeWidth={2} /><SearchText><T $ls={-0.557}>Search</T></SearchText><Fair /></SearchPill>
    {apps.map((a, i) => <AppCell key={i} $run={a.run} $active={a.active} $dx={a.dx}>{a.icon}{a.badge}</AppCell>)}
    <Grow />
    <TrayCell $w={32}><ChevronUp size={16} strokeWidth={2} /></TrayCell>
    <TrayCell $w={32}><Mic size={17} strokeWidth={1.500} color="#9c9c9c" /></TrayCell>
    <TrayCell $w={44}><T $ls={-0.479}>ENG</T><T $ls={-0.414}>US</T></TrayCell>
    <TrayCell $w={32}><Wifi size={18} strokeWidth={2.200} /></TrayCell>
    <TrayCell $w={20}><TraySpeaker /></TrayCell>
    <TrayCell $w={24}><Svg w={17}><rect x="2.500" y="4.500" width="12" height="9" rx="1.500" /><path d="M5 7h7.500v4H5ZM16 8v2" fill="currentColor" /><path d="M4 0 1 4h2L2 7l3.500-4h-2L4.500 1Z" fill="currentColor" stroke="none" /></Svg></TrayCell>
    <TrayCell $w={69} $end><T $ls={-0.264}>12:02 AM</T><T $ls={-0.149}>8/23/2024</T></TrayCell>
    <TrayCell $w={30}><Svg w={16}><path d="M7 2C4.500 2.500 3.500 4.500 3.500 7c0 2-.5 3.500-2 5h12c-1-1-1.500-2-1.800-3M6.500 14h2.500M6.500 6.500h3l-3 3h3M11 1.500h3l-3 3.500h3" /></Svg></TrayCell>
    <CopilotCell><CopilotPre /><PreTag>PRE</PreTag></CopilotCell>
  </Taskbar>
);

export default function App() {
  return (
    <Screen>
      <Global />
      <BrowserTabs />
      <Window>
        <Main>
          <Address />
          <Favorites />
          <GitBook />
        </Main>
        <EdgeSidebar />
      </Window>
      <WindowsTaskbar />
    </Screen>
  );
}
